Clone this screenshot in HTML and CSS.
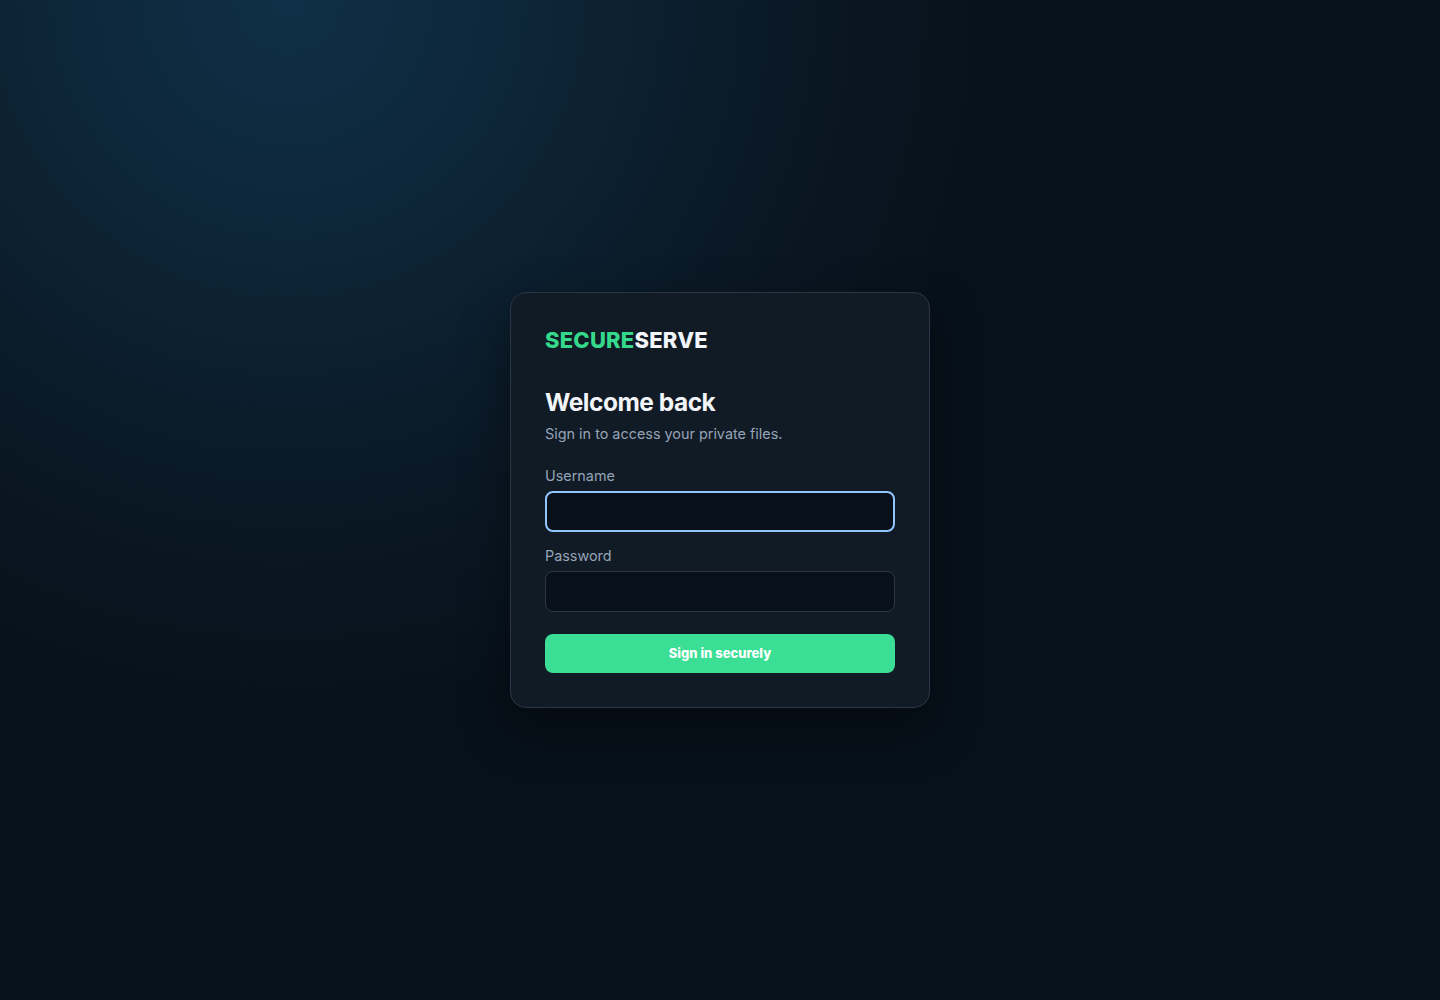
FILE: index.html
```html
<!DOCTYPE html>
<html lang="en">
<head>
  <meta charset="UTF-8">
  <meta name="viewport" content="width=device-width, initial-scale=1.0">
  <title>SecureServe</title>
  <link rel="stylesheet" href="styles.css">
</head>
<body>
  <main class="login-card">
    <div class="brand"><span class="brand-accent">SECURE</span>SERVE</div>
    <h1 class="title">Welcome back</h1>
    <p class="subtitle">Sign in to access your private files.</p>
    <form class="login-form">
      <label class="field-label" for="username">Username</label>
      <input class="field-input field-focused" id="username" type="text">
      <label class="field-label" for="password">Password</label>
      <input class="field-input" id="password" type="password">
      <button class="submit-button" type="button">Sign in securely</button>
    </form>
  </main>
</body>
</html>
```

FILE: styles.css
```css
* {
  box-sizing: border-box;
}
html, body {
  height: 100%;
}
body {
  margin: 0;
  display: flex;
  align-items: center;
  justify-content: center;
  font-family: Inter, "Liberation Sans", sans-serif;
  background-color: #07111a;
  background-image: radial-gradient(circle 720px at 20% 0%, #0f3048 0%, #0d2537 35%, #0a1825 70%, rgba(7, 17, 26, 0) 100%);
  overflow: hidden;
}
.login-card {
  width: 420px;
  height: 416px;
  padding: 34px;
  background: #111b25;
  border: 1px solid #2a3644;
  border-radius: 16px;
  box-shadow: 0 20px 50px rgba(0, 0, 0, 0.4);
}
.brand {
  font-size: 22px;
  line-height: 26px;
  font-weight: 800;
  letter-spacing: 0.2px;
  color: #f1f5f9;
}
.brand-accent {
  color: #34d98b;
}
.title {
  margin: 32px 0 0;
  font-size: 24.5px;
  line-height: 34px;
  font-weight: 700;
  letter-spacing: -0.02em;
  color: #f1f5f9;
}
.subtitle {
  margin: 5px 0 0;
  font-size: 14.4px;
  line-height: 20px;
  color: #94a3b8;
}
.login-form {
  display: flex;
  flex-direction: column;
  margin-top: 22px;
}
.field-label {
  margin-bottom: 5px;
  font-size: 14.4px;
  line-height: 20px;
  color: #94a3b8;
}
.field-input {
  height: 41px;
  margin-bottom: 14px;
  padding: 0 12px;
  background: #08111a;
  border: 1px solid #2a3644;
  border-radius: 8px;
  color: #f1f5f9;
  outline: none;
}
.field-focused {
  border: 2px solid #93c5fd;
}
.submit-button {
  height: 39px;
  margin-top: 8px;
  padding: 0 0 2px;
  background: #3ade94;
  border: none;
  border-radius: 8px;
  color: #ffffff;
  font-family: inherit;
  font-size: 13px;
  font-weight: 800;
  cursor: pointer;
}
```
